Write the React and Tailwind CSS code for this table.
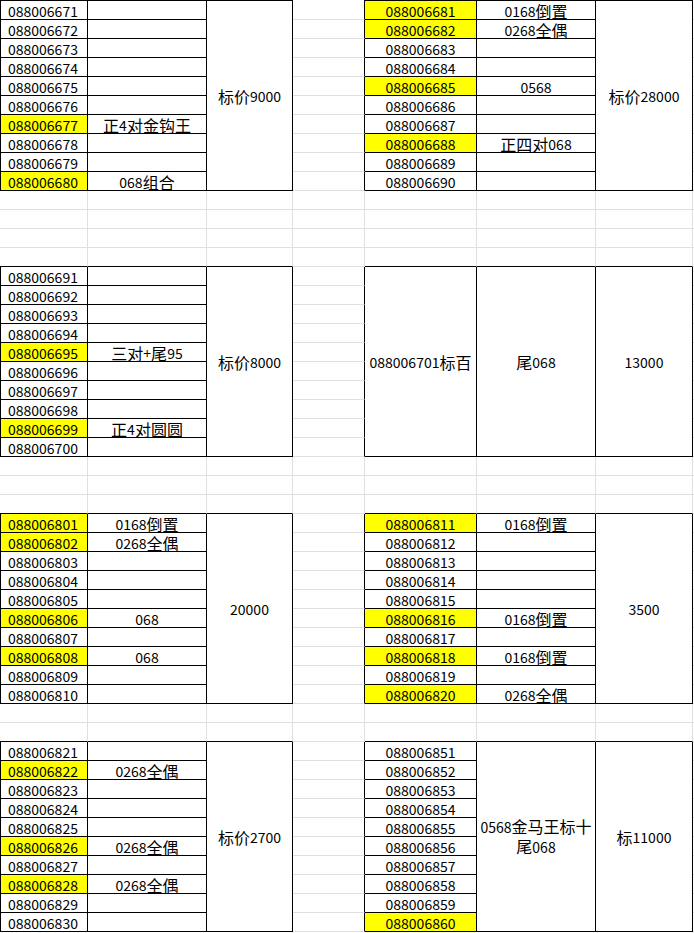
import React from "react";

const FONT = "font-['Noto_Sans_CJK_SC',sans-serif]";

function Txt({ s }) {
  const parts = s.match(/[\x00-\x7f]+|[^\x00-\x7f]+/g) || [];
  return parts.map((p, i) =>
    /^[\x00-\x7f]/.test(p) ? (
      <span key={i} className="text-[14px] leading-[16px]">{p}</span>
    ) : (
      <span key={i} className="text-[16px] leading-[16px]">{p}</span>
    )
  );
}

function Cell({ r, b, l, t, noR, yellow, merged, left, children }) {
  const cls = [
    "flex min-w-0 text-[14px] leading-[16px] text-black whitespace-nowrap",
    merged ? "row-span-10 items-center" : "items-end",
    left ? "justify-start pl-[7px]" : "justify-center",
    "border-b",
    b ? "border-b-black" : "border-b-[#e0e0e0]",
    noR ? "" : "border-r",
    noR ? "" : r ? "border-r-black" : "border-r-[#e0e0e0]",
    l ? "border-l border-l-black" : "",
    t ? "border-t border-t-black" : "",
    yellow ? "bg-[#ffff00]" : "bg-white",
  ].join(" ");
  return <div className={cls}>{children}</div>;
}

const range = (start) => Array.from({ length: 10 }, (_, i) => "08800" + String(start + i));

const bands = [
  {
    type: "block",
    left: { nums: range(6671), notes: { 6: "正4对金钩王", 9: "068组合" }, price: "标价9000" },
    right: { kind: "list", nums: range(6681), notes: { 0: "0168倒置", 1: "0268全偶", 4: "0568", 7: "正四对068" }, price: "标价28000" },
  },
  { type: "blank", rows: 4 },
  {
    type: "block",
    left: { nums: range(6691), notes: { 4: "三对+尾95", 8: "正4对圆圆" }, price: "标价8000" },
    right: { kind: "merged", e: "088006701标百", f: "尾068", g: "13000" },
  },
  { type: "blank", rows: 3 },
  {
    type: "block",
    left: { nums: range(6801), notes: { 0: "0168倒置", 1: "0268全偶", 5: "068", 7: "068" }, price: "20000" },
    right: { kind: "list", nums: range(6811), notes: { 0: "0168倒置", 5: "0168倒置", 7: "0168倒置", 9: "0268全偶" }, price: "3500" },
  },
  { type: "blank", rows: 2 },
  {
    type: "block",
    left: { nums: range(6821), notes: { 1: "0268全偶", 5: "0268全偶", 7: "0268全偶" }, price: "标价2700" },
    right: { kind: "fmerged", nums: range(6851), yellow: { 9: true }, f: ["0568金马王标十", "尾068"], g: "标11000" },
  },
];

function buildCells() {
  const cells = [];
  let key = 0;
  bands.forEach((band, bi) => {
    if (band.type === "blank") {
      for (let i = 0; i < band.rows; i++) {
        const bk = i === band.rows - 1 && !!bands[bi + 1] && bands[bi + 1].type === "block";
        cells.push(<Cell key={key++} b={bk} />);
        cells.push(<Cell key={key++} b={bk} />);
        cells.push(<Cell key={key++} b={bk} />);
        cells.push(<Cell key={key++} />);
        cells.push(<Cell key={key++} b={bk} />);
        cells.push(<Cell key={key++} b={bk} />);
        cells.push(<Cell key={key++} b={bk} />);
        cells.push(<Cell key={key++} noR />);
      }
      return;
    }
    const first = bi === 0;
    const L = band.left;
    const R = band.right;
    for (let i = 0; i < 10; i++) {
      const t = first && i === 0;
      const hasNote = L.notes[i] !== undefined;
      cells.push(
        <Cell key={key++} r b l t={t} left yellow={hasNote}>
          <Txt s={L.nums[i]} />
        </Cell>
      );
      cells.push(
        <Cell key={key++} r b t={t}>
          {hasNote ? <Txt s={L.notes[i]} /> : null}
        </Cell>
      );
      if (i === 0) {
        cells.push(
          <Cell key={key++} r b t={t} merged>
            <Txt s={L.price} />
          </Cell>
        );
      }
      cells.push(<Cell key={key++} r />);
      if (R.kind === "list") {
        const rn = R.notes[i] !== undefined;
        cells.push(
          <Cell key={key++} r b t={t} yellow={rn}>
            <Txt s={R.nums[i]} />
          </Cell>
        );
        cells.push(
          <Cell key={key++} r b t={t}>
            {rn ? <Txt s={R.notes[i]} /> : null}
          </Cell>
        );
        if (i === 0) {
          cells.push(
            <Cell key={key++} r b t={t} merged>
              <Txt s={R.price} />
            </Cell>
          );
        }
      } else if (R.kind === "merged") {
        if (i === 0) {
          cells.push(
            <Cell key={key++} r b t={t} merged>
              <Txt s={R.e} />
            </Cell>
          );
          cells.push(
            <Cell key={key++} r b t={t} merged>
              <Txt s={R.f} />
            </Cell>
          );
          cells.push(
            <Cell key={key++} r b t={t} merged>
              <Txt s={R.g} />
            </Cell>
          );
        }
      } else {
        cells.push(
          <Cell key={key++} r b t={t} yellow={!!R.yellow[i]}>
            <Txt s={R.nums[i]} />
          </Cell>
        );
        if (i === 0) {
          cells.push(
            <Cell key={key++} r b t={t} merged>
              <div className="flex flex-col items-center gap-[3px]">
                <div className="leading-[16px]"><Txt s={R.f[0]} /></div>
                <div className="leading-[16px]"><Txt s={R.f[1]} /></div>
              </div>
            </Cell>
          );
          cells.push(
            <Cell key={key++} r b t={t} merged>
              <Txt s={R.g} />
            </Cell>
          );
        }
      }
      cells.push(<Cell key={key++} noR />);
    }
  });
  return cells;
}

export default function App() {
  return (
    <div className={`w-[694px] h-[933px] overflow-hidden bg-white ${FONT}`}>
      <div className="grid grid-cols-[88px_119px_86px_72px_112px_119px_97px_1fr] grid-rows-[20px_repeat(48,19px)]">
        {buildCells()}
      </div>
    </div>
  );
}
